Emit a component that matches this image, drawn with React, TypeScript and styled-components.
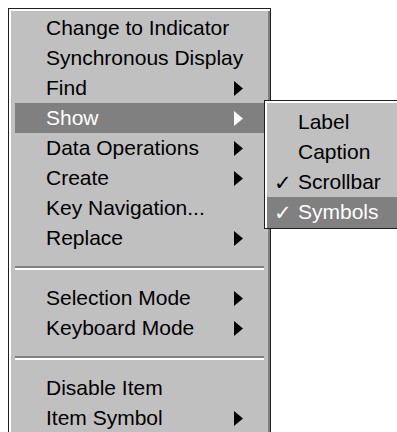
import React from "react";
import styled, { createGlobalStyle } from "styled-components";

const Global = createGlobalStyle`
  html, body { margin: 0; padding: 0; background: #ffffff; overflow: hidden; }
  body { font-family: "Liberation Sans", Arial, sans-serif; }
`;

const Page = styled.div`
  position: relative;
  width: 397px;
  height: 432px;
  padding: 8px 0 0 8px;
  box-sizing: border-box;
  overflow: hidden;
`;

const Menu = styled.div`
  width: 263px;
  box-sizing: border-box;
  background: #c0c0c0;
  border: 1px solid #202020;
  box-shadow: inset 2px 2px #ffffff, inset -2px -2px #808080;
  padding: 4px 6px 6px 6px;
  display: flex;
  flex-direction: column;
`;

const SubMenu = styled.div`
  position: absolute;
  left: 264px;
  top: 100px;
  width: 220px;
  box-sizing: border-box;
  background: #c0c0c0;
  border: 1px solid #202020;
  box-shadow: inset 2px 2px #ffffff, inset -2px -2px #808080;
  padding: 6px 2px 1px 2px;
  display: flex;
  flex-direction: column;
`;

const Row = styled.div<{ $active?: boolean; $indent: number }>`
  height: 30px;
  display: flex;
  align-items: center;
  padding-left: ${(p) => p.$indent}px;
  background: ${(p) => (p.$active ? "#808080" : "transparent")};
  color: ${(p) => (p.$active ? "#ffffff" : "#000000")};
  font-size: 21px;
  line-height: 30px;
  white-space: nowrap;
  position: relative;
`;

const Label = styled.span`
  flex: 1;
`;

const Check = styled.span`
  position: absolute;
  left: 7px;
  top: 1px;
  font-family: "DejaVu Sans", sans-serif;
  font-size: 21px;
`;

const Arrow = styled.svg`
  width: 9px;
  height: 15px;
  margin-right: 21px;
  flex: none;
`;

const Separator = styled.div`
  height: 30px;
  display: flex;
  flex-direction: column;
  justify-content: center;
  &::before {
    content: "";
    display: block;
    height: 2px;
    background: #808080;
  }
  &::after {
    content: "";
    display: block;
    height: 2px;
    background: #ffffff;
  }
`;

type Item = { label: string; sub?: boolean; active?: boolean } | "sep";

const items: Item[] = [
  { label: "Change to Indicator" },
  { label: "Synchronous Display" },
  { label: "Find", sub: true },
  { label: "Show", sub: true, active: true },
  { label: "Data Operations", sub: true },
  { label: "Create", sub: true },
  { label: "Key Navigation..." },
  { label: "Replace", sub: true },
  "sep",
  { label: "Selection Mode", sub: true },
  { label: "Keyboard Mode", sub: true },
  "sep",
  { label: "Disable Item" },
  { label: "Item Symbol", sub: true },
];

const subItems = [
  { label: "Label", checked: false, active: false },
  { label: "Caption", checked: false, active: false },
  { label: "Scrollbar", checked: true, active: false },
  { label: "Symbols", checked: true, active: true },
];

const TriArrow = ({ color }: { color: string }) => (
  <Arrow viewBox="0 0 9 15">
    <polygon points="0,0 9,7.5 0,15" fill={color} />
  </Arrow>
);

export default function App() {
  return (
    <>
      <Global />
      <Page>
        <Menu>
          {items.map((it, i) =>
            it === "sep" ? (
              <Separator key={i} />
            ) : (
              <Row key={i} $active={it.active} $indent={31}>
                <Label>{it.label}</Label>
                {it.sub && <TriArrow color={it.active ? "#ffffff" : "#000000"} />}
              </Row>
            )
          )}
        </Menu>
        <SubMenu>
          {subItems.map((s, i) => (
            <Row key={i} $active={s.active} $indent={31}>
              {s.checked && <Check>✓</Check>}
              <Label>{s.label}</Label>
            </Row>
          ))}
        </SubMenu>
      </Page>
    </>
  );
}
